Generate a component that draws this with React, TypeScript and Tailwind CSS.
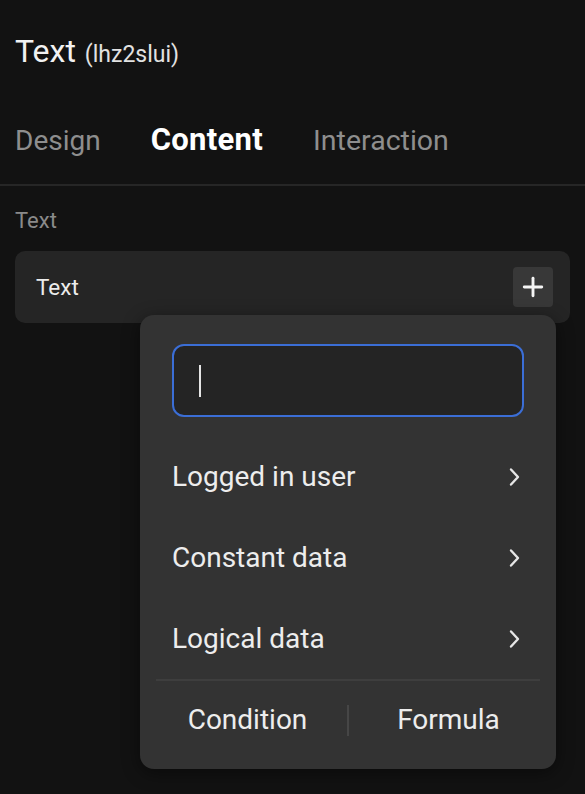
import { Plus } from "lucide-react";

const menuItems = ["Logged in user", "Constant data", "Logical data"];

function Chevron() {
  return (
    <svg width="20" height="20" viewBox="0 0 20 20" fill="none">
      <path d="M7 2.5 L14 10 L7 17.5" stroke="#e6e6e6" strokeWidth="2.4" strokeLinecap="round" strokeLinejoin="round" />
    </svg>
  );
}

export default function App() {
  return (
    <main className="min-h-[794px] w-full bg-[#121212] font-['Roboto','Liberation_Sans',sans-serif] text-[#f0f0f0]">
      {/* header */}
      <div className="flex items-baseline gap-[9px] px-[15px] pt-[33px]">
        <span className="text-[32px] leading-[36px] text-[#f2f2f2]">Text</span>
        <span className="text-[23px] leading-[36px] text-[#e2e2e2]">(lhz2slui)</span>
      </div>

      {/* tabs */}
      <div className="mt-[50px] flex items-baseline gap-[50px] px-[15px] pb-[26px]">
        <span className="text-[28px] leading-[34px] text-[#8e8e8e]">Design</span>
        <span className="text-[31px] font-bold leading-[34px] tracking-[0.01em] text-white">Content</span>
        <span className="text-[28.5px] leading-[34px] text-[#8e8e8e]">Interaction</span>
      </div>
      <div className="h-[2px] w-full bg-[#262626]" />

      {/* content */}
      <div className="px-[15px] pt-[22px]">
        <div className="text-[22px] leading-[26px] text-[#8a8a8a]">Text</div>

        <div className="relative mt-[17px]">
          <div className="flex h-[72px] items-center justify-between rounded-[10px] bg-[#252525] pl-[21px] pr-[17px]">
            <span className="text-[22.5px] leading-[26px] text-[#ececec]">Text</span>
            <button className="flex h-[40px] w-[40px] items-center justify-center rounded-[4px] bg-[#383838]">
              <Plus size={30} strokeWidth={2.3} color="#f5f5f5" />
            </button>
          </div>

          {/* dropdown */}
          <div className="absolute left-[125px] top-[64px] w-[416px] rounded-[14px] bg-[#333333] pb-[10px] shadow-[0_4px_18px_rgba(0,0,0,0.45)]">
            <div className="px-[32px] pt-[29px]">
              <div className="flex h-[73px] items-center rounded-[12px] border-2 border-[#3b6ed6] bg-[#242424] pl-[25px]">
                <span className="h-[32px] w-[2px] bg-[#e5e5e5]" />
              </div>
            </div>

            <div className="mt-[19px] flex flex-col">
              {menuItems.map((item) => (
                <div key={item} className="flex h-[81px] items-center justify-between px-[32px]">
                  <span className="text-[28px] leading-[32px] text-[#ededed]">{item}</span>
                  <Chevron />
                </div>
              ))}
            </div>

            <div className="mx-[16px] h-[2px] bg-[#3e3e3e]" />

            <div className="flex h-[78px] items-center px-[8px]">
              <span className="flex-1 text-center text-[28px] leading-[32px] text-[#ededed]">Condition</span>
              <span className="h-[31px] w-[2px] bg-[#464646]" />
              <span className="flex-1 text-center text-[28px] leading-[32px] text-[#ededed]">Formula</span>
            </div>
          </div>
        </div>
      </div>
    </main>
  );
}
